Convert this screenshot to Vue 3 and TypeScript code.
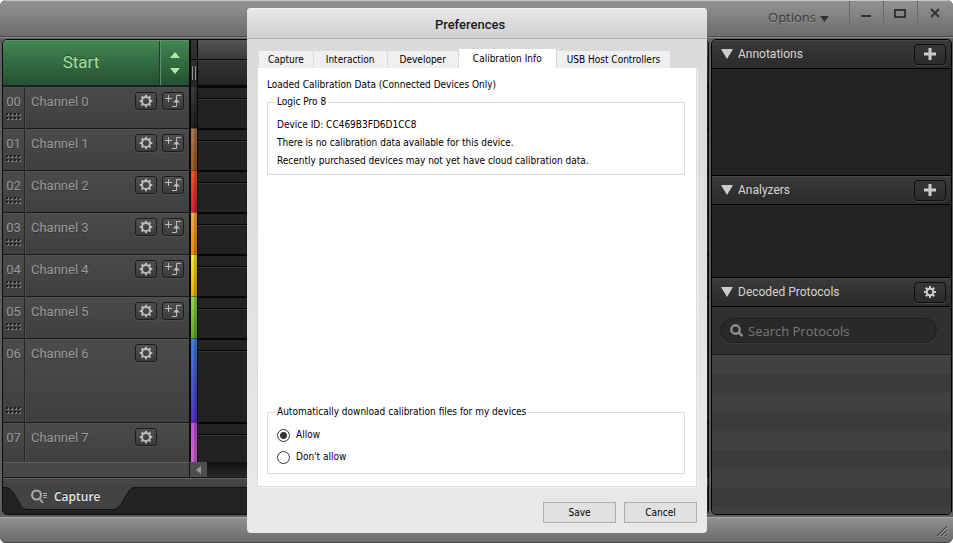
<script setup lang="ts">
import { ref } from 'vue'

interface Channel {
  id: string
  name: string
  tall?: boolean
  trigger: boolean
  color: string
}

const channels: Channel[] = [
  { id: '00', name: 'Channel 0', trigger: true, color: 'black' },
  { id: '01', name: 'Channel 1', trigger: true, color: 'brown' },
  { id: '02', name: 'Channel 2', trigger: true, color: 'red' },
  { id: '03', name: 'Channel 3', trigger: true, color: 'orange' },
  { id: '04', name: 'Channel 4', trigger: true, color: 'yellow' },
  { id: '05', name: 'Channel 5', trigger: true, color: 'green' },
  { id: '06', name: 'Channel 6', trigger: false, color: 'blue', tall: true },
  { id: '07', name: 'Channel 7', trigger: false, color: 'violet' },
]

const tabs: string[] = ['Capture', 'Interaction', 'Developer', 'Calibration Info', 'USB Host Controllers']
const activeTab = ref<string>('Calibration Info')
const download = ref<'allow' | 'deny'>('allow')
const search = ref<string>('')
const teeth: number[] = [0, 45, 90, 135, 180, 225, 270, 315]
</script>

<template>
  <div class="window">
    <header class="titlebar">
      <button class="options" type="button">
        Options
        <svg width="9" height="6" viewBox="0 0 9 6" aria-hidden="true"><path d="M0 0H9L4.500 6Z" /></svg>
      </button>
      <button class="winbtn" type="button" aria-label="Minimize">
        <svg width="12" height="12" viewBox="0 0 12 12"><path d="M1 8H11V10H1Z" /></svg>
      </button>
      <button class="winbtn" type="button" aria-label="Maximize">
        <svg width="12" height="12" viewBox="0 0 12 12"><path d="M1 3H11V10H1Z" class="line" /></svg>
      </button>
      <button class="winbtn last" type="button" aria-label="Close">
        <svg width="12" height="12" viewBox="0 0 12 12"><path d="M2 2L10 10M10 2L2 10" class="line cross" /></svg>
      </button>
    </header>

    <div class="body">
      <main class="capture">
        <div class="top">
          <div class="starter">
            <button class="start" type="button">Start</button>
            <button class="stepper" type="button" aria-label="Capture settings">
              <svg width="10" height="22" viewBox="0 0 10 22"><path d="M0 6L5 0L10 6ZM0 16H10L5 22Z" /></svg>
            </button>
          </div>
          <div class="gutter"><span class="blank"></span><span class="grip"></span></div>
          <div class="ruler"><span></span><span></span></div>
        </div>

        <div class="channels">
          <div v-for="c in channels" :key="c.id" class="channel" :class="{ tall: c.tall }">
            <div class="number">
              {{ c.id }}
              <svg v-if="c.id !== '07'" class="dots" width="16" height="8" viewBox="0 0 16 8" aria-hidden="true">
                <g v-for="i in 4" :key="i" :transform="`translate(${(i - 1) * 4} 0)`">
                  <path d="M0 0H2V2H0ZM0 4H2V6H0Z" fill="#202020" />
                  <path d="M2 1H3V3H1V2H2ZM2 5H3V7H1V6H2Z" fill="#858585" />
                </g>
              </svg>
            </div>
            <div class="label">
              <span>{{ c.name }}</span>
              <button class="tool" type="button" :aria-label="`${c.name} settings`">
                <svg width="14" height="14" viewBox="-7 -7 14 14">
                  <circle r="4.100" />
                  <path v-for="a in teeth" :key="a" d="M0 -4.500V-6.300" :transform="`rotate(${a})`" />
                </svg>
              </button>
              <button v-if="c.trigger" class="tool" type="button" :aria-label="`${c.name} trigger`">
                <svg class="trig" width="16" height="14" viewBox="0 0 16 14">
                  <path d="M0 4.500H7M3.500 1V8M16 1.500H11.500V12.500H7" />
                  <path class="solid" d="M8 8.500L11.500 5L15 8.500Z" />
                </svg>
              </button>
              <span v-else class="tool-space"></span>
            </div>
            <div class="strip" :class="c.color"></div>
            <div class="trace"></div>
          </div>
        </div>

        <div class="scroll">
          <div class="scroll-left"></div>
          <button class="arrow" type="button" aria-label="Scroll left">
            <svg width="5" height="8" viewBox="0 0 5 8"><path d="M5 0V8L0 4Z" /></svg>
          </button>
          <div class="track"></div>
        </div>
        <nav class="sessions">
          <button class="session" type="button">
            <svg class="shape" width="134" height="23" viewBox="0 0 134 23" aria-hidden="true">
              <path class="fill" d="M0 0C7 0 9 2 12 7L18 17C20 21 22 22 25 22H110C114 22 116 21 119 17L125 7C128 2 130 0 134 0Z" />
              <path class="edge" d="M0 .500C7 .500 9 2 12 7L18 17C20 21 22 22.500 25 22.500H110C114 22.500 116 21 119 17L125 7C128 2 130 .500 134 .500" />
            </svg>
            <svg class="mag" width="17" height="15" viewBox="0 0 17 15" aria-hidden="true">
              <circle cx="5.500" cy="6" r="4.500" /><path d="M8.500 9.500L12 14" />
              <path class="bars" d="M12 4.500H16M12 6.500H16M12 8.500H16" />
            </svg>
            <span>Capture</span>
          </button>
        </nav>
      </main>

      <aside class="side">
        <section class="annotations">
          <h2>
            <svg width="12" height="10" viewBox="0 0 12 10" aria-hidden="true"><path d="M0 0H12L6 10Z" /></svg>
            <span>Annotations</span>
            <button type="button" aria-label="Add annotation">
              <svg width="12" height="12" viewBox="0 0 12 12"><path d="M4.500 0H7.500V4.500H12V7.500H7.500V12H4.500V7.500H0V4.500H4.500Z" /></svg>
            </button>
          </h2>
        </section>
        <section class="analyzers">
          <h2>
            <svg width="12" height="10" viewBox="0 0 12 10" aria-hidden="true"><path d="M0 0H12L6 10Z" /></svg>
            <span>Analyzers</span>
            <button type="button" aria-label="Add analyzer">
              <svg width="12" height="12" viewBox="0 0 12 12"><path d="M4.500 0H7.500V4.500H12V7.500H7.500V12H4.500V7.500H0V4.500H4.500Z" /></svg>
            </button>
          </h2>
        </section>
        <section class="decoded">
          <h2>
            <svg width="12" height="10" viewBox="0 0 12 10" aria-hidden="true"><path d="M0 0H12L6 10Z" /></svg>
            <span>Decoded Protocols</span>
            <button type="button" aria-label="Protocol settings">
              <svg class="gear" width="12" height="12" viewBox="-6 -6 12 12">
                <circle r="3.300" />
                <path v-for="a in teeth" :key="a" d="M0 -3.500V-6" :transform="`rotate(${a})`" />
              </svg>
            </button>
          </h2>
          <div class="search-area">
            <label class="search">
              <svg width="14" height="13" viewBox="0 0 14 13" aria-hidden="true">
                <circle cx="5.500" cy="5.500" r="4.200" /><path d="M8.500 8.500L12.500 12" />
              </svg>
              <input v-model="search" type="text" placeholder="Search Protocols" aria-label="Search Protocols" />
            </label>
          </div>
          <div class="results"></div>
        </section>
      </aside>
    </div>

    <footer class="status">
      <svg width="11" height="11" viewBox="0 0 11 11" aria-hidden="true">
        <path class="hi" d="M1 11L11 1M5 11L11 5M9 11L11 9" /><path d="M0 10L10 0M4 10L10 4M8 10L10 8" />
      </svg>
    </footer>

    <div class="overlay">
      <div class="dialog" role="dialog" aria-labelledby="dialog-title">
        <h1 id="dialog-title">Preferences</h1>
        <div class="content">
          <div class="tabs" role="tablist">
            <button
              v-for="t in tabs"
              :key="t"
              type="button"
              role="tab"
              :aria-selected="t === activeTab"
              :class="{ active: t === activeTab }"
              @click="activeTab = t"
            >{{ t }}</button>
          </div>
          <div class="pane" role="tabpanel">
            <p class="lead">Loaded Calibration Data (Connected Devices Only)</p>
            <fieldset class="device">
              <legend>Logic Pro 8</legend>
              <p>Device ID: CC469B3FD6D1CC8</p>
              <p>There is no calibration data available for this device.</p>
              <p>Recently purchased devices may not yet have cloud calibration data.</p>
            </fieldset>
            <fieldset class="download">
              <legend>Automatically download calibration files for my devices</legend>
              <label><input v-model="download" type="radio" name="download" value="allow" />Allow</label>
              <label><input v-model="download" type="radio" name="download" value="deny" />Don't allow</label>
            </fieldset>
          </div>
          <div class="actions">
            <button type="button">Save</button>
            <button type="button">Cancel</button>
          </div>
        </div>
      </div>
    </div>
  </div>
</template>

<style>
body {
  background: #fff;
}
</style>

<style scoped>
* {
  box-sizing: border-box;
}
button {
  margin: 0;
  padding: 0;
  border: 0;
  background: none;
  font: inherit;
  color: inherit;
}
h1,
h2,
p {
  margin: 0;
}
svg {
  display: block;
  flex: none;
}
.window {
  position: relative;
  display: flex;
  flex-direction: column;
  height: 100vh;
  overflow: hidden;
  border-radius: 6px;
  background: #606060;
  font-family: Roboto, sans-serif;
}
.titlebar {
  display: flex;
  justify-content: flex-end;
  flex: none;
  height: 37px;
  border-top: 1px solid #c4c5c5;
  border-bottom: 1px solid #484848;
  background: linear-gradient(#929292, #6c6c6c);
}
.options {
  display: flex;
  align-items: center;
  gap: 4px;
  height: 32px;
  margin-right: 20px;
  font: 13px "Open Sans", sans-serif;
  color: #373737;
  text-shadow: 0 1px #9a9a9a;
}
.options svg {
  margin-top: 3px;
}
.options svg,
.winbtn svg {
  fill: #333;
}
.winbtn {
  display: flex;
  justify-content: center;
  width: 34px;
  height: 24px;
  padding: 6px 2px 0 0;
  border-left: 1px solid;
  border-image: linear-gradient(#606060, #6d6d6d) 1;
}
.winbtn.last {
  width: 36px;
}
.winbtn .line {
  fill: none;
  stroke: #333;
  stroke-width: 2;
}
.body {
  display: flex;
  flex: 1;
  gap: 2px;
  min-height: 0;
  padding: 1px 1px 2px 2px;
  border-top: 1px solid #8b8b8b;
}
.capture {
  display: flex;
  flex: 1;
  flex-direction: column;
  min-width: 0;
  overflow: hidden;
  border: 1px solid #0c0c0c;
  border-radius: 5px;
  background: #454545;
}
.top {
  display: flex;
  flex: none;
  height: 46px;
}
.starter {
  display: flex;
  width: 186px;
  border-bottom: 1px solid #152a1c;
  border-top: 1px solid #55996a;
  background: linear-gradient(#438655, #24502f);
}
.start {
  flex: 1;
  padding-bottom: 2px;
  font-size: 17px;
  color: #a7dea0;
  border-right: 1px solid #1c3f26;
  text-shadow: 0 -1px #245031;
}
.stepper {
  display: grid;
  place-items: center;
  width: 29px;
  border-left: 1px solid #539366;
}
.stepper svg {
  fill: #aeeaa4;
}
.gutter {
  display: flex;
  flex-direction: column;
  width: 9px;
  border-right: 1px solid #000;
  border-left: 2px solid #080808;
  background: linear-gradient(#343434, #252525);
}
.blank {
  height: 20px;
  border-bottom: 1px solid #080808;
}
.grip {
  width: 4px;
  height: 14px;
  margin: 6px 0 0 1px;
  border: solid #929292;
  border-width: 0 1px;
}
.ruler {
  flex: 1;
}
.ruler span {
  display: block;
  height: 20px;
  border-bottom: 1px solid #080808;
  background: linear-gradient(#555, #3a3a3a);
}
.ruler span + span {
  height: 26px;
  border-top: 1px solid #3d3d3d;
  background: linear-gradient(#343434, #242424);
}
.channels {
  display: flex;
  flex: 1;
  flex-direction: column;
  min-height: 0;
  overflow: hidden;
}
.channel {
  display: flex;
  flex: none;
  height: 42px;
}
.channel.tall {
  height: 84px;
}
.number,
.label {
  display: flex;
  border-top: 1px solid #1a1a1a;
  background: linear-gradient(#585858, #4b4b4b 1px, #3f3f3f);
  font-size: 13px;
  line-height: 15px;
  color: #9b9b9b;
  text-shadow: 0 1px #333;
}
.number {
  flex-direction: column;
  justify-content: space-between;
  align-items: center;
  width: 22px;
  padding: 7px 0 7px;
  border-right: 1px solid #262626;
}
.label {
  gap: 5px;
  width: 164px;
  padding: 5px 5px 0 5px;
  border-left: 1px solid #4f4f4f;
}
.label span:first-child {
  flex: 1;
  padding-top: 2px;
}
.tool {
  display: grid;
  place-items: center;
  width: 22px;
  height: 18px;
  border: 1px solid #1d1d1d;
  border-radius: 3px;
  background: linear-gradient(#505050, #3c3c3c);
  box-shadow: 0 1px #505050;
}
.tool-space {
  width: 22px;
}
.tool svg {
  fill: none;
  stroke: #bcbcbc;
  stroke-width: 2;
}
.tool .trig {
  stroke-width: 1;
}
.trig .solid {
  fill: #bcbcbc;
  stroke: none;
}
.strip {
  width: 9px;
  border: solid #080808;
  border-width: 0 1px 0 2px;
  box-shadow: inset 0 1px rgba(0, 0, 0, 0.4), inset -3px 0 rgba(0, 0, 0, 0.2);
}
.strip.black {
  background: linear-gradient(#3e3e3e, #1e1e1e);
}
.strip.brown {
  background: linear-gradient(#b07850, #9d5a1c);
}
.strip.red {
  background: linear-gradient(#f25a20, #df1c38);
}
.strip.orange {
  background: linear-gradient(#f4b048, #f08800);
}
.strip.yellow {
  background: linear-gradient(#f4ec38, #efae00);
}
.strip.green {
  background: linear-gradient(#98d848, #62a828);
}
.strip.blue {
  background: linear-gradient(#4084dc, #5030cc);
}
.strip.violet {
  background: linear-gradient(#c84ce0, #d060cc);
}
.trace {
  flex: 1;
  background: linear-gradient(#070707 2px, #232323 2px 12px, #050505 12px 13px, #363636 13px 14px, #222 14px);
}
.scroll {
  display: flex;
  flex: none;
  height: 15px;
}
.scroll-left {
  width: 187px;
  border-top: 1px solid #606060;
  border-right: 1px solid #111;
  background: #484848;
}
.arrow {
  display: grid;
  place-items: center;
  width: 17px;
  background: #4f4f4f;
}
.arrow svg {
  fill: #999;
}
.track {
  flex: 1;
  background: linear-gradient(#101010, #2a2a2a);
}
.sessions {
  flex: none;
  height: 37px;
  border-top: 1px solid #191919;
  background: linear-gradient(#606060 1px, #484848 1px, #424242 9px, #111 9px 10px, #232323 10px);
}
.session {
  position: relative;
  display: flex;
  align-items: center;
  gap: 6px;
  height: 23px;
  margin-top: 9px;
  margin-left: -1px;
  padding: 0 34px 4px 29px;
  font: 600 12px "Open Sans", sans-serif;
  color: #e6e6e6;
  text-shadow: 0 -1px #222;
}
.session .shape {
  position: absolute;
  top: 0;
  left: 0;
}
.shape .fill {
  fill: #434343;
}
.shape .edge {
  fill: none;
  stroke: #101010;
}
.mag,
.session span {
  position: relative;
}
.mag {
  fill: none;
  stroke: #aaa;
  stroke-width: 2;
}
.mag .bars {
  stroke-width: 1;
}
.side {
  display: flex;
  flex-direction: column;
  width: 241px;
  overflow: hidden;
  border: 1px solid #000;
  border-radius: 5px;
  background: #232323;
}
.annotations {
  height: 135px;
}
.analyzers {
  height: 102px;
}
.decoded {
  display: flex;
  flex: 1;
  flex-direction: column;
}
.side h2 {
  display: flex;
  align-items: center;
  gap: 5px;
  height: 29px;
  padding: 0 5px 0 9px;
  border-bottom: 1px solid #000;
  background: linear-gradient(#484848 1px, #3a3a3a 1px, #2a2a2a);
  font-size: 12px;
  font-weight: 400;
  color: #d4d4d4;
}
.side section + section h2 {
  height: 30px;
  border-top: 1px solid #000;
}
.side h2 svg {
  fill: #ccc;
}
.side h2 span {
  flex: 1;
}
.side h2 button {
  display: grid;
  place-items: center;
  width: 32px;
  height: 21px;
  border: 1px solid #0d0d0d;
  border-radius: 4px;
  background: linear-gradient(#383838, #2b2b2b);
  box-shadow: 0 1px #444;
}
.side h2 .gear {
  fill: none;
  stroke: #ccc;
  stroke-width: 2;
}
.search-area {
  padding: 11px 14px 11px 8px;
  border-bottom: 1px solid #191919;
  background: #303030;
}
.search {
  display: flex;
  align-items: center;
  gap: 4px;
  height: 25px;
  padding: 0 10px 0 9px;
  border: 1px solid #1e1e1e;
  border-radius: 13px;
  background: #292929;
  box-shadow: 0 1px #3c3c3c;
}
.search svg {
  fill: none;
  stroke: #8c8c8c;
  stroke-width: 2.400;
}
.search input {
  flex: 1;
  min-width: 0;
  padding: 0;
  border: 0;
  outline: 0;
  background: none;
  font: 13px "Open Sans", sans-serif;
  color: #ccc;
}
.search input::placeholder {
  color: #7a7a7a;
  opacity: 1;
}
.results {
  flex: 1;
  background: repeating-linear-gradient(#414141 0 19px, #3b3b3b 19px 38px);
}
.status {
  display: flex;
  flex: none;
  justify-content: flex-end;
  align-items: flex-end;
  height: 26px;
  padding: 0 5px 5px;
  border-top: 1px solid #aaa;
  border-bottom: 1px solid #484848;
  background: linear-gradient(#909090, #6a6a6a);
}
.status path {
  stroke: #333;
}
.status .hi {
  stroke: #999;
}
.overlay {
  position: absolute;
  inset: 0;
  display: flex;
  justify-content: center;
  padding: 8px 0 10px 1px;
}
.dialog {
  display: flex;
  flex-direction: column;
  width: 460px;
  overflow: hidden;
  border-radius: 4px;
  background: linear-gradient(#d9d9d9, #e9e9e9);
  font-family: "DejaVu Sans Condensed", "DejaVu Sans", sans-serif;
  font-size: 10px;
  line-height: 14px;
  color: #000;
}
.dialog h1 {
  height: 31px;
  padding-right: 14px;
  border-top: 1px solid #f4f4f4;
  border-bottom: 1px solid #b0b0b0;
  background: linear-gradient(#e8e8e8, #d0d0d0);
  font: 500 13px/32px Roboto, sans-serif;
  text-align: center;
  color: #1a1a1a;
}
.content {
  display: flex;
  flex: 1;
  flex-direction: column;
  padding: 10px;
}
.tabs {
  display: flex;
  align-items: flex-end;
  padding: 0 2px;
}
.tabs button {
  height: 17px;
  padding: 0 12px;
  border-right: 1px solid #d9d9d9;
  background: #f0f0f0;
}
.tabs button:first-child {
  padding: 0 9px;
}
.tabs button:last-child {
  padding: 0 10px;
  border-right: 0;
}
.tabs button.active {
  height: 19px;
  padding: 0 14px;
  background: #fff;
}
.pane {
  display: flex;
  flex: 1;
  flex-direction: column;
  border: 1px solid #dcdcdc;
  border-top-color: #fff;
  background: #fff;
  padding: 9px 11px 12px 9px;
  box-shadow: 1px 1px #f0f0f0;
}
.lead {
  height: 17px;
}
fieldset {
  min-width: 0;
  margin: 0;
  padding: 0 9px;
  border: 1px solid #dcdcdc;
}
legend {
  margin-left: -2px;
  padding: 0 2px;
}
.device {
  height: 80px;
}
.device p {
  line-height: 18px;
}
.device legend + p {
  margin-top: 7px;
}
.download {
  margin-top: auto;
  height: 69px;
}
.download legend {
  margin-bottom: 5px;
}
.download label {
  display: flex;
  align-items: center;
  gap: 6px;
  height: 22px;
}
.download input {
  appearance: none;
  width: 13px;
  height: 13px;
  margin: 0;
  border: 1px solid #333;
  border-radius: 50%;
  background: #fff;
}
.download input:checked {
  background: radial-gradient(circle, #333 0 3px, #fff 4px);
}
.actions {
  display: flex;
  justify-content: flex-end;
  gap: 8px;
  margin-top: 15px;
}
.actions button {
  width: 73px;
  height: 21px;
  border: 1px solid #adadad;
  background: #e1e1e1;
}
</style>
